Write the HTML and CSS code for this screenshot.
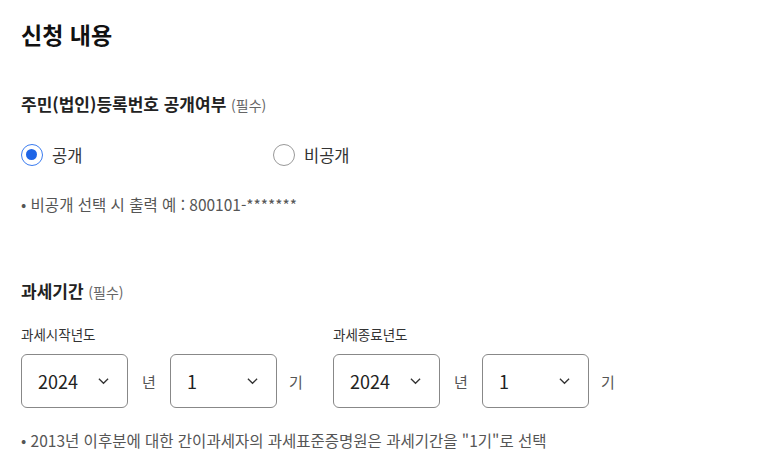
FILE: index.html
```html
<!DOCTYPE html>
<html lang="ko">
<head>
<meta charset="utf-8">
<link rel="stylesheet" href="styles.css">
</head>
<body>
<div class="page">
  <h1 class="title">신청 내용</h1>

  <section class="block">
    <h2 class="sub">주민(법인)등록번호 공개여부 <span class="req">(필수)</span></h2>
    <div class="radios">
      <label class="radio on"><span class="dot"></span>공개</label>
      <label class="radio"><span class="dot"></span>비공개</label>
    </div>
    <p class="note">• 비공개 선택 시 출력 예 : 800101-*******</p>
  </section>

  <section class="block period">
    <h2 class="sub">과세기간 <span class="req">(필수)</span></h2>
    <div class="groups">
      <div class="group">
        <div class="glabel">과세시작년도</div>
        <div class="row">
          <div class="select"><span>2024</span><svg viewBox="0 0 12 8" class="chev"><path d="M1 1.5 6 6.5 11 1.5" fill="none" stroke="#333" stroke-width="1.4"/></svg></div>
          <span class="unit">년</span>
          <div class="select"><span>1</span><svg viewBox="0 0 12 8" class="chev"><path d="M1 1.5 6 6.5 11 1.5" fill="none" stroke="#333" stroke-width="1.4"/></svg></div>
          <span class="unit">기</span>
        </div>
      </div>
      <div class="group">
        <div class="glabel">과세종료년도</div>
        <div class="row">
          <div class="select"><span>2024</span><svg viewBox="0 0 12 8" class="chev"><path d="M1 1.5 6 6.5 11 1.5" fill="none" stroke="#333" stroke-width="1.4"/></svg></div>
          <span class="unit">년</span>
          <div class="select"><span>1</span><svg viewBox="0 0 12 8" class="chev"><path d="M1 1.5 6 6.5 11 1.5" fill="none" stroke="#333" stroke-width="1.4"/></svg></div>
          <span class="unit">기</span>
        </div>
      </div>
    </div>
    <p class="note foot">• 2013년 이후분에 대한 간이과세자의 과세표준증명원은 과세기간을 "1기"로 선택</p>
  </section>
</div>
</body>
</html>
```

FILE: styles.css
```css
* { box-sizing: border-box; }
html, body { margin: 0; padding: 0; background: #fff; }
body {
  font-family: "Noto Sans CJK KR", "Noto Sans", sans-serif;
  color: #222;
}
.page { padding: 18px 21px 0; }
.title {
  margin: 0;
  font-size: 23px;
  font-weight: 700;
  line-height: 32px;
  color: #111;
}
.block { margin-top: 42px; }
.sub {
  margin: 0;
  font-size: 17px;
  font-weight: 700;
  line-height: 24px;
  color: #222;
}
.req { font-size: 14px; font-weight: 400; color: #666; }
.radios { display: flex; margin-top: 26px; }
.radio {
  display: flex;
  align-items: center;
  width: 252px;
  font-size: 16.5px;
  line-height: 24px;
  color: #333;
}
.dot {
  width: 22px; height: 22px;
  border-radius: 50%;
  border: 1.5px solid #999;
  margin-right: 9px;
  flex: none;
  position: relative;
}
.radio.on .dot { border-color: #3b7cf0; }
.radio.on .dot::after {
  content: "";
  position: absolute;
  left: 4px; top: 4px;
  width: 11px; height: 11px;
  border-radius: 50%;
  background: #1f65e6;
}
.note {
  margin: 27px 0 0;
  font-size: 15.5px;
  line-height: 20px;
  color: #555;
}
.period { margin-top: 65px; }
.groups { display: flex; margin-top: 20px; }
.group { width: 312px; }
.glabel { font-size: 13.5px; line-height: 20px; color: #333; }
.row { display: flex; align-items: center; margin-top: 10px; }
.select {
  width: 107px; height: 54px;
  border: 1px solid #888;
  border-radius: 6px;
  display: flex;
  align-items: center;
  justify-content: space-between;
  padding: 0 18px 0 16px;
  font-size: 18px;
  color: #222;
}
.chev { width: 11px; height: 8px; }
.unit {
  font-size: 15px;
  color: #555;
  width: 42px;
  text-align: center;
}
.row .unit:last-child { text-align: left; padding-left: 12px; }
.foot { margin-top: 22px; }
```
